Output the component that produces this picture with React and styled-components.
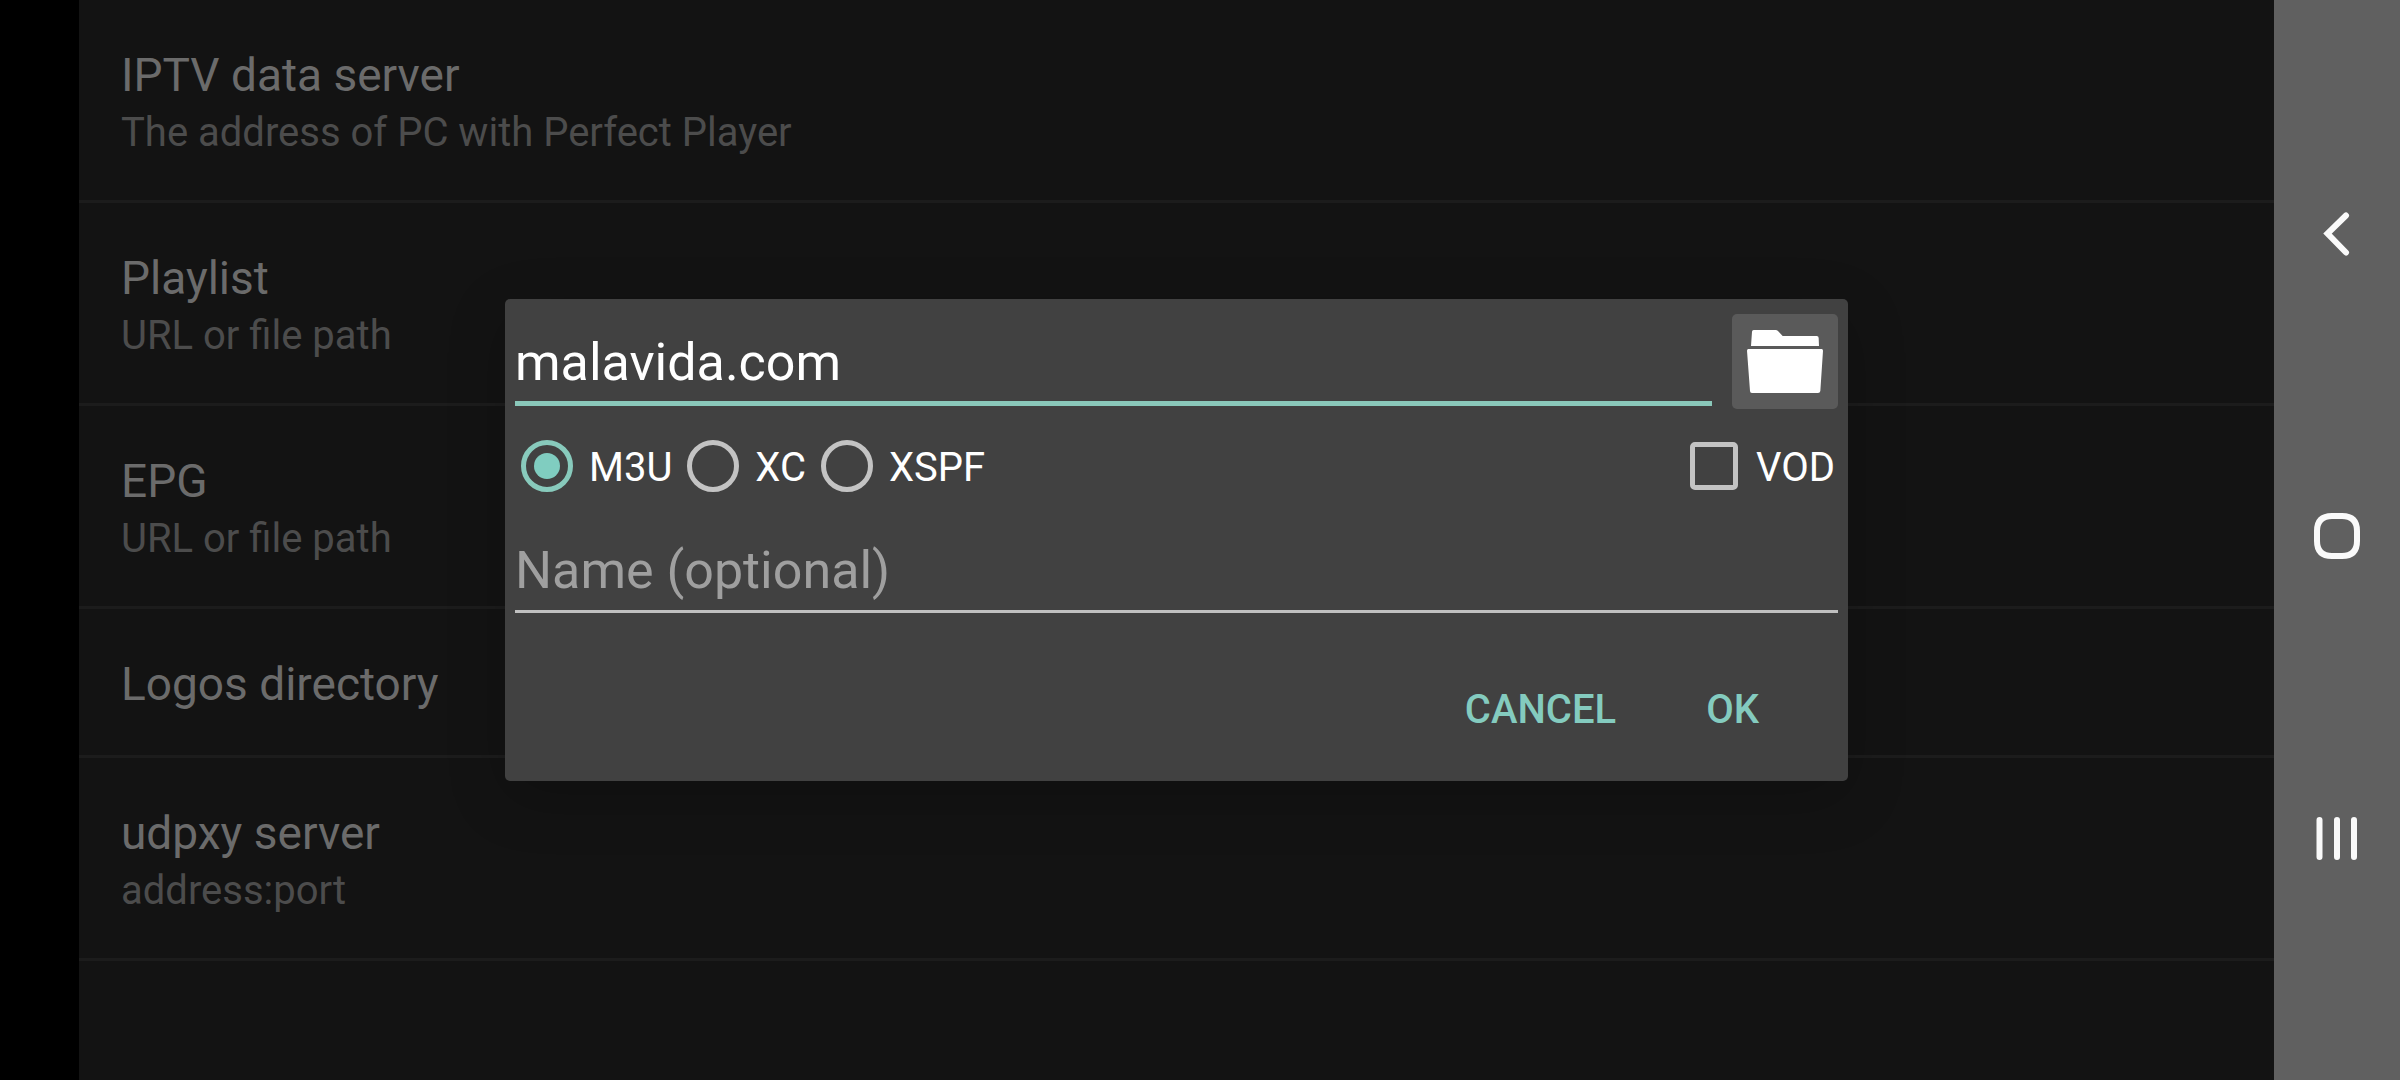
import React, { useState } from "react";
import styled, { createGlobalStyle } from "styled-components";

const settings = [
  { title: "IPTV data server", summary: "The address of PC with Perfect Player" },
  { title: "Playlist", summary: "URL or file path" },
  { title: "EPG", summary: "URL or file path" },
  { title: "Logos directory" },
  { title: "udpxy server", summary: "address:port" },
];

const formats = ["M3U", "XC", "XSPF"];

const App = () => {
  const [url, setUrl] = useState("malavida.com");
  const [name, setName] = useState("");
  const [format, setFormat] = useState("M3U");
  const [vod, setVod] = useState(false);

  return (
    <Screen>
      <GlobalStyle />
      <Content>
        <SettingList>
          {settings.map((item) => (
            <SettingItem key={item.title}>
              <SettingBtn type="button">
                <SettingTitle>{item.title}</SettingTitle>
                {item.summary && <SettingSummary>{item.summary}</SettingSummary>}
              </SettingBtn>
            </SettingItem>
          ))}
        </SettingList>

        <Overlay>
          <Dialog role="dialog" aria-label="Playlist">
            <UrlRow>
              <TextField
                $active
                type="text"
                aria-label="URL or file path"
                value={url}
                onChange={(e) => setUrl(e.target.value)}
              />
              <FolderBtn type="button" aria-label="Choose file">
                <FolderIcon />
              </FolderBtn>
            </UrlRow>

            <OptionRow>
              {formats.map((item) => (
                <Option key={item}>
                  <Radio
                    type="radio"
                    name="format"
                    checked={format === item}
                    onChange={() => setFormat(item)}
                  />
                  <OptionText>{item}</OptionText>
                </Option>
              ))}
              <Option $last>
                <Checkbox
                  type="checkbox"
                  checked={vod}
                  onChange={(e) => setVod(e.target.checked)}
                />
                <OptionText>VOD</OptionText>
              </Option>
            </OptionRow>

            <TextField
              type="text"
              aria-label="Name (optional)"
              placeholder="Name (optional)"
              value={name}
              onChange={(e) => setName(e.target.value)}
            />

            <BtnArea>
              <DialogBtn type="button">CANCEL</DialogBtn>
              <DialogBtn type="button">OK</DialogBtn>
            </BtnArea>
          </Dialog>
        </Overlay>
      </Content>

      <NavBar>
        <NavBtn type="button" aria-label="Back">
          <svg width="46" height="46" viewBox="0 0 46 46">
            <path d="M32 4.5 L13.5 22.5 L32 41.5" />
          </svg>
        </NavBtn>
        <NavBtn type="button" aria-label="Home">
          <svg width="46" height="46" viewBox="0 0 46 46">
            <path d="M18 3 H28 C38 3 43 8 43 18 V28 C43 38 38 43 28 43 H18 C8 43 3 38 3 28 V18 C3 8 8 3 18 3 Z" />
          </svg>
        </NavBtn>
        <NavBtn type="button" aria-label="Recent apps">
          <svg width="46" height="46" viewBox="0 0 46 46">
            <path d="M5.5 5 V42 M23 5 V42 M40 5 V42" />
          </svg>
        </NavBtn>
      </NavBar>
    </Screen>
  );
};

const FolderIcon = () => (
  <svg width="76" height="63" viewBox="0 0 228 189" fill="#ffffff">
    <path d="M20 0 H86 Q90 0 93 3 L107 18 H209 Q215 18 215 24 L216 48 H12 L15 5 Q15 0 20 0 Z" />
    <path d="M4 57 H224 Q228 57 228 62 L220 183 Q219 189 213 189 H15 Q9 189 9 183 L0 62 Q0 57 4 57 Z" />
  </svg>
);

const GlobalStyle = createGlobalStyle`
  * {
    box-sizing: border-box;
  }
  body {
    margin: 0;
    background: #000000;
    font-family: Roboto, "Liberation Sans", sans-serif;
  }
  button,
  input {
    font-family: inherit;
    border: none;
    outline: none;
  }
  button {
    padding: 0;
    cursor: pointer;
  }
`;

const Screen = styled.div`
  display: flex;
  min-height: 100vh;
  padding-left: 79px;
  background: #000000;
`;

const Content = styled.main`
  position: relative;
  flex: 1;
  background: #131313;
`;

const SettingList = styled.ul`
  margin: 0;
  padding: 0;
  list-style: none;
`;

const SettingItem = styled.li`
  border-bottom: 3px solid #1c1c1c;
`;

const SettingBtn = styled.button`
  display: flex;
  flex-direction: column;
  gap: 8px;
  width: 100%;
  padding: 48px 42px 44px;
  background: none;
  text-align: left;
`;

const SettingTitle = styled.span`
  color: #6b6b6b;
  font-size: 46px;
  line-height: 54px;
`;

const SettingSummary = styled.span`
  color: #4c4c4c;
  font-size: 40px;
  line-height: 46px;
`;

const Overlay = styled.div`
  position: absolute;
  inset: 0;
  display: flex;
  justify-content: center;
  align-items: center;
`;

const Dialog = styled.div`
  width: 100%;
  max-width: 1343px;
  padding: 15px 10px 22px;
  background: #414141;
  border-radius: 5px;
  box-shadow: 0px 16px 60px rgba(0, 0, 0, 0.2);
`;

const UrlRow = styled.div`
  display: flex;
  align-items: flex-start;
  gap: 20px;
`;

const TextField = styled.input`
  flex: 1;
  display: block;
  width: 100%;
  min-width: 0;
  height: 92px;
  padding: 10px 0 0;
  background: none;
  border-bottom: ${(props) =>
    props.$active ? "5px solid #8ac8ba" : "3px solid #c0c0c0"};
  color: #ffffff;
  font-size: 52px;

  &::placeholder {
    color: #9f9f9f;
    opacity: 1;
  }
`;

const FolderBtn = styled.button`
  display: flex;
  justify-content: center;
  align-items: center;
  width: 106px;
  height: 95px;
  background: #5a5a5a;
  border-radius: 5px;
`;

const OptionRow = styled.div`
  display: flex;
  align-items: center;
  gap: 15px;
  margin: 31px 0 29px;
  padding: 0 3px 0 6px;
`;

const Option = styled.label`
  display: flex;
  align-items: center;
  gap: 16px;
  height: 52px;
  margin-left: ${(props) => (props.$last ? "auto" : "0")};
  cursor: pointer;
`;

const OptionText = styled.span`
  padding-top: 4px;
  color: #ffffff;
  font-size: 40px;
  line-height: 46px;
`;

const Radio = styled.input`
  appearance: none;
  display: grid;
  place-items: center;
  width: 52px;
  height: 52px;
  margin: 0;
  border: 5px solid #c3c3c3;
  border-radius: 50%;

  &:checked {
    border-color: #88cabc;
  }
  &:checked::before {
    content: "";
    width: 26px;
    height: 26px;
    background: #80cdc0;
    border-radius: 50%;
  }
`;

const Checkbox = styled.input`
  appearance: none;
  width: 48px;
  height: 48px;
  margin: 0 2px;
  border: 5px solid #c3c3c3;
  border-radius: 5px;

  &:checked {
    background: #80cdc0;
    border-color: #80cdc0;
  }
`;

const BtnArea = styled.div`
  display: flex;
  justify-content: flex-end;
  margin-top: 46px;
  padding-right: 34px;
`;

const DialogBtn = styled.button`
  height: 100px;
  padding: 0 45px;
  background: none;
  color: #84cbbf;
  font-size: 40px;
  font-weight: 500;
`;

const NavBar = styled.nav`
  display: flex;
  flex-direction: column;
  justify-content: center;
  width: 126px;
  padding-bottom: 8px;
  background: #606060;
`;

const NavBtn = styled.button`
  display: flex;
  justify-content: center;
  align-items: center;
  height: 302px;
  background: none;

  path {
    fill: none;
    stroke: #fafafa;
    stroke-width: 6;
    stroke-linecap: round;
  }
`;

export default App;
